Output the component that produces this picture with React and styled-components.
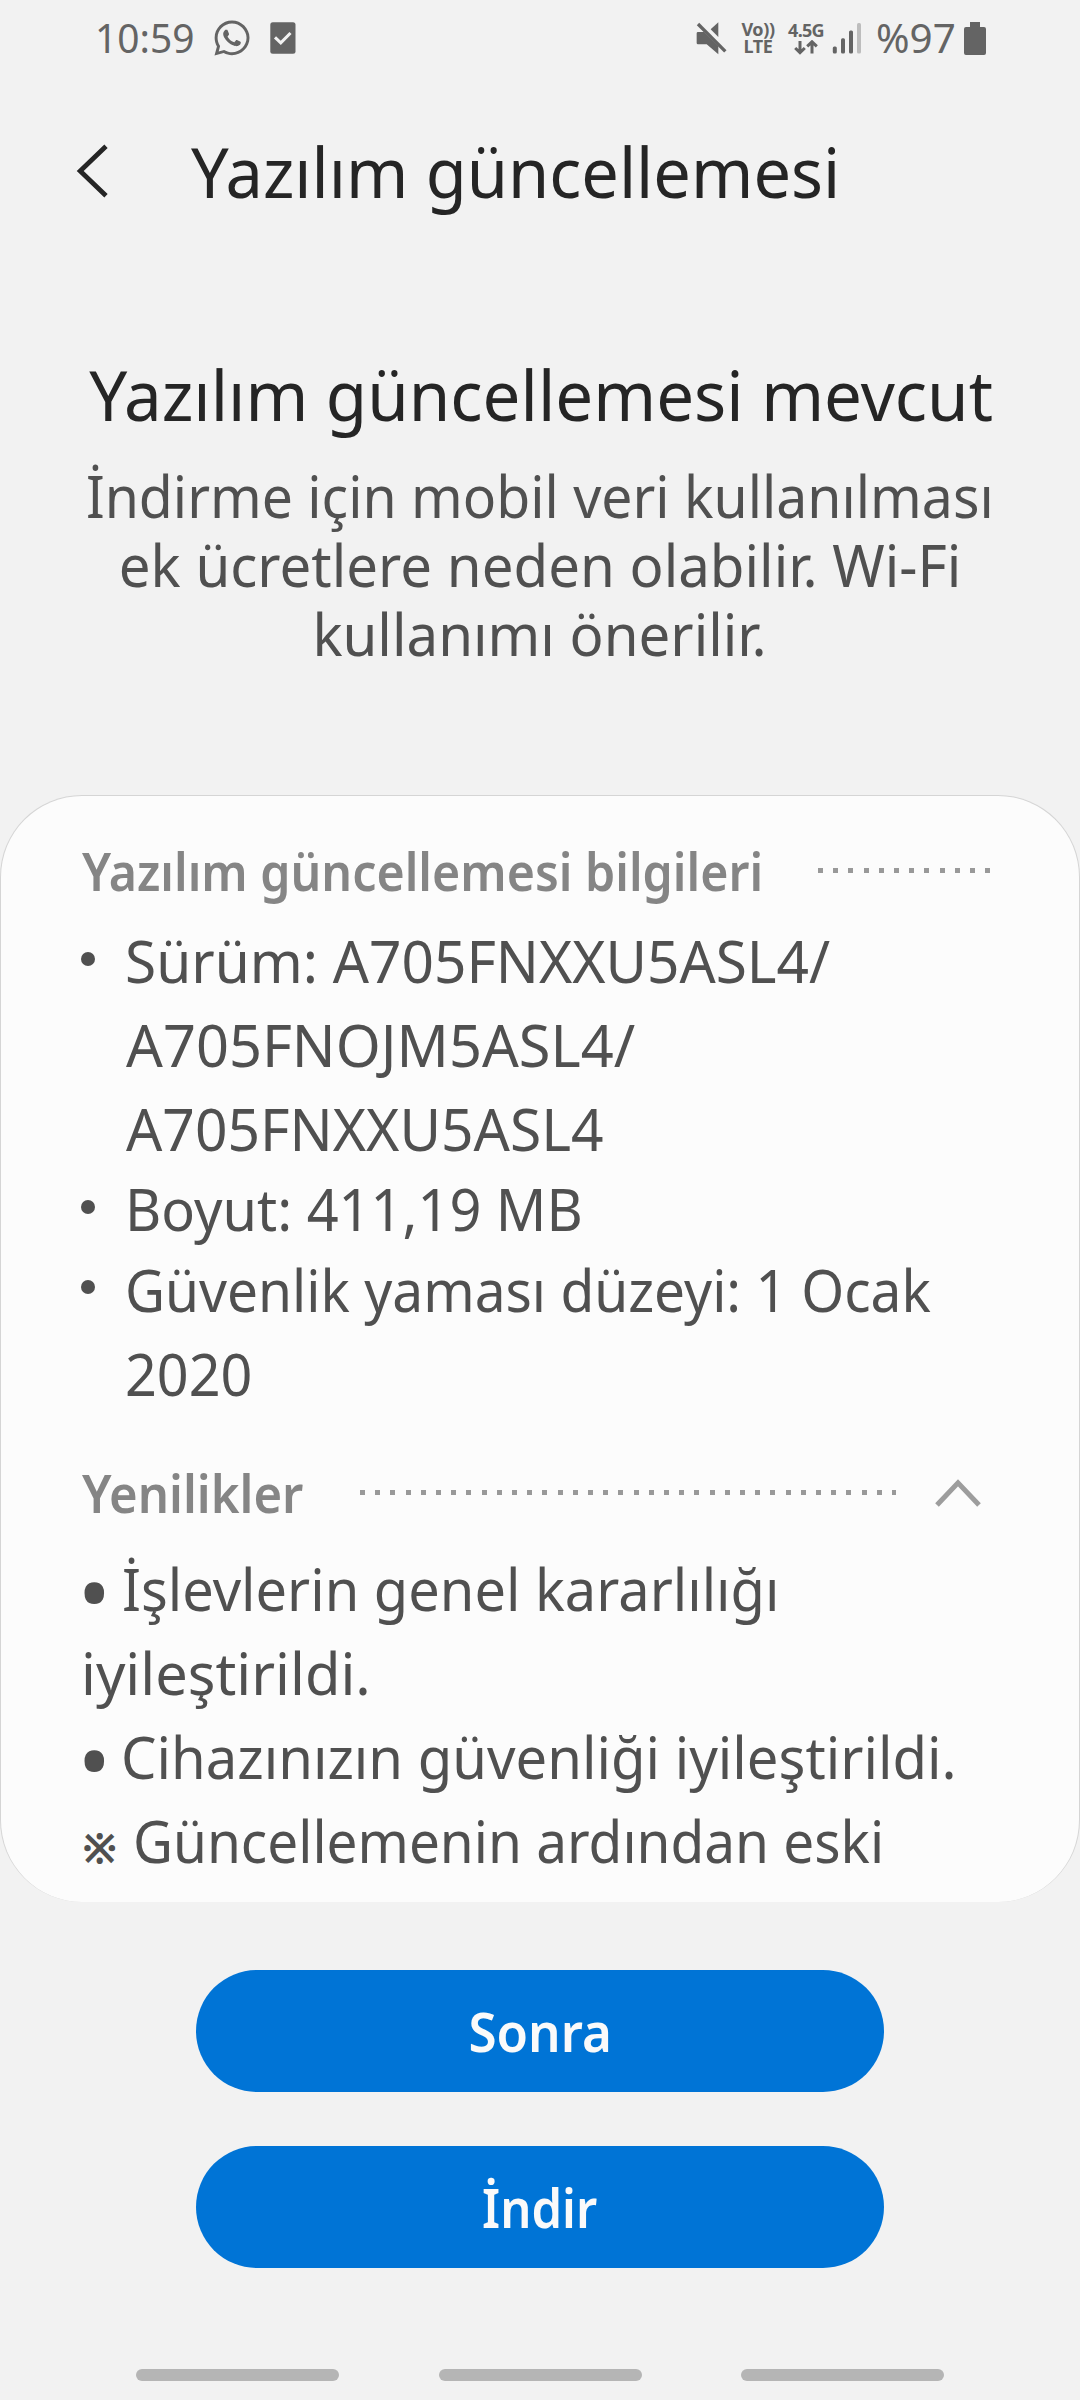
import React, { Component } from 'react'
import styled, { createGlobalStyle } from 'styled-components'
import { FaWhatsapp } from 'react-icons/fa'

const versionLines = [
    { text: 'Sürüm: A705FNXXU5ASL4/', k: 0.9784, shift: 0.4 },
    { text: 'A705FNOJM5ASL4/', k: 0.995, shift: 1 },
    { text: 'A705FNXXU5ASL4', k: 0.981, shift: 1 },
]
const sizeLines = [{ text: 'Boyut: 411,19 MB', k: 0.963, shift: 0.3 }]
const patchLines = [
    { text: 'Güvenlik yaması düzeyi: 1 Ocak', k: 0.949, shift: 0 },
    { text: '2020', k: 0.9601, shift: 0.5 },
]

const InfoItem = ({ lines }) => (
    <Item>
        <Dot />
        <ItemText>
            {lines.map(l => (
                <Line key={l.text} $k={l.k} $shift={l.shift}>{l.text}</Line>
            ))}
        </ItemText>
    </Item>
)

class StatusBar extends Component {
    render() {
        return (
            <Status>
                <Clock>10:59</Clock>
                <FaWhatsapp size={40} />
                <Clipboard width="26" height="32" viewBox="0 0 26 32">
                    <rect x="0.3" y="0.3" width="25.2" height="31.4" rx="2.5" fill="#646464" />
                    <path d="M5 15.3l5.8 5.6L20.5 11" fill="none" stroke="#f2f2f2" strokeWidth="3" />
                </Clipboard>
                <Spacer />
                <Mute width="32" height="36" viewBox="45 60 96 108">
                    <path d="M92 88L115 67V111Z" fill="#646464" />
                    <path d="M54 96H72L115 138V163L80 133H54Q50 133 50 129V100Q50 96 54 96Z" fill="#646464" />
                    <path d="M54 72L136 154" stroke="#646464" strokeWidth="10" />
                </Mute>
                <Volte>
                    <span>Vo))</span>
                    <span>LTE</span>
                </Volte>
                <Mobile>
                    <span>4.5G</span>
                    <svg width="24" height="15" viewBox="0 0 24 15">
                        <path d="M6 1V12M1.2 8L6 12.6L10.8 8" fill="none" stroke="#646464" strokeWidth="3" />
                        <path d="M18 13.5V2M13.2 6.4L18 1.8L22.8 6.4" fill="none" stroke="#646464" strokeWidth="3" />
                    </svg>
                </Mobile>
                <Signal width="30" height="32" viewBox="0 0 30 32">
                    <rect x="0.8" y="24.5" width="4" height="7" rx="1.5" fill="#646464" />
                    <rect x="9" y="16.3" width="4" height="15.2" rx="1.5" fill="#646464" />
                    <rect x="17" y="8.5" width="4" height="23" rx="1.5" fill="#646464" />
                    <rect x="25" y="1" width="4" height="30.5" rx="1.5" fill="#bdbdbd" />
                </Signal>
                <Percent>%97</Percent>
                <svg width="22" height="33" viewBox="0 0 22 33">
                    <path d="M6 0H16V5H20Q22 5 22 7V31Q22 33 20 33H2Q0 33 0 31V7Q0 5 2 5H6Z" fill="#646464" />
                </svg>
            </Status>
        )
    }
}

export default class App extends Component {
    render() {
        return (
            <>
                <GlobalStyle />
                <Screen>
                    <StatusBar />
                    <Header>
                        <svg width="36" height="58" viewBox="0 0 36 58">
                            <path d="M32 4.2L6.2 29L32 53.8" fill="none" stroke="#252525" strokeWidth="4.8" />
                        </svg>
                        <Title>Yazılım güncellemesi</Title>
                    </Header>
                    <Notice>
                        <Heading>Yazılım güncellemesi mevcut</Heading>
                        <NoticeLine $k={0.954}>İndirme için mobil veri kullanılması</NoticeLine>
                        <NoticeLine $k={0.9728}>ek ücretlere neden olabilir. Wi-Fi</NoticeLine>
                        <NoticeLine $k={0.9727}>kullanımı önerilir.</NoticeLine>
                    </Notice>
                    <Card>
                        <SectionRow>
                            <SectionTitle $k={0.929} $width={736.4}>Yazılım güncellemesi bilgileri</SectionTitle>
                            <Dots $width={172.6} />
                        </SectionRow>
                        <List>
                            <InfoItem lines={versionLines} />
                            <InfoItem lines={sizeLines} />
                            <InfoItem lines={patchLines} />
                        </List>
                        <SectionRow>
                            <SectionTitle $k={0.943} $width={278.6}>Yenilikler</SectionTitle>
                            <Dots $width={535.5} />
                            <Chevron width="46" height="28" viewBox="0 0 46 28">
                                <path d="M2 26L23 3.8L44 26" fill="none" stroke="#9d9d9d" strokeWidth="5" />
                            </Chevron>
                        </SectionRow>
                        <News>
                            <NewsLine>
                                <Bullet>•</Bullet>
                                <Line $k={0.965} $shift={-2}>İşlevlerin genel kararlılığı</Line>
                            </NewsLine>
                            <NewsLine>
                                <Line $k={0.9962}>iyileştirildi.</Line>
                            </NewsLine>
                            <NewsLine>
                                <Bullet>•</Bullet>
                                <Line $k={0.969} $shift={-3}>Cihazınızın güvenliği iyileştirildi.</Line>
                            </NewsLine>
                            <NewsLine>
                                <Note>※</Note>
                                <Line $k={0.947}>Güncellemenin ardından eski</Line>
                            </NewsLine>
                        </News>
                    </Card>
                    <Actions>
                        <Button><Label $k={0.93}>Sonra</Label></Button>
                        <Button><Label $k={0.89}>İndir</Label></Button>
                    </Actions>
                    <NavBar>
                        <NavKey />
                        <NavKey />
                        <NavKey />
                    </NavBar>
                </Screen>
            </>
        )
    }
}


const GlobalStyle = createGlobalStyle`
    * {
        box-sizing: border-box;
    }
    body {
        margin: 0;
        background: #f2f2f2;
    }
    svg {
        display: block;
        flex: none;
    }
`
const Screen = styled.div`
    width: 1080px;
    height: 2400px;
    overflow: hidden;
    display: flex;
    flex-direction: column;
    background: #f2f2f2;
    font-family: "Noto Sans", "Open Sans", sans-serif;
    color: #505050;
    white-space: nowrap;
`
const Status = styled.div`
    flex: none;
    height: 76px;
    display: flex;
    align-items: center;
    padding: 0 94px 0 95px;
    color: #646464;
`
const Clock = styled.div`
    width: 116.5px;
    font-size: 40px;
    line-height: 78px;
    transform: scaleX(0.9727);
    transform-origin: left;
`
const Clipboard = styled.svg`
    margin-left: 18.5px;
`
const Spacer = styled.div`
    flex: 1;
`
const Mute = styled.svg`
    margin-right: 14px;
`
const Volte = styled.div`
    width: 34px;
    margin-right: 12px;
    display: flex;
    flex-direction: column;
    align-items: center;
    font-size: 18px;
    font-weight: 700;
    line-height: 17.5px;
    letter-spacing: -0.4px;
`
const Mobile = styled.div`
    width: 38px;
    margin-right: 7px;
    display: flex;
    flex-direction: column;
    align-items: center;
    gap: 1px;
    font-size: 18px;
    font-weight: 700;
    line-height: 18px;
    letter-spacing: -0.7px;
`
const Signal = styled.svg`
    margin-right: 14px;
`
const Percent = styled.div`
    width: 88px;
    font-size: 40px;
    line-height: 78px;
    transform: scaleX(1.01);
    transform-origin: left;
`
const Header = styled.div`
    flex: none;
    height: 190px;
    padding: 0 0 0 74px;
    display: flex;
    align-items: center;
    color: #252525;
`
const Title = styled.h1`
    margin: 0 0 0 80.5px;
    font-size: 70px;
    font-weight: 400;
    line-height: 90px;
    transform: scaleX(0.9535);
    transform-origin: left;
`
const Notice = styled.div`
    flex: none;
    height: 529px;
    padding-top: 82.5px;
    display: flex;
    flex-direction: column;
    align-items: center;
`
const Heading = styled.h2`
    margin: 0 0 22.5px;
    padding-left: 2px;
    color: #252525;
    font-size: 70px;
    font-weight: 400;
    line-height: 90px;
    transform: scaleX(0.9611);
`
const NoticeLine = styled.div`
    font-size: 58px;
    line-height: 69px;
    transform: scaleX(${p => p.$k});
`
const Card = styled.div`
    flex: none;
    height: 1107px;
    padding: 39.5px 0 0 79.8px;
    overflow: hidden;
    background: #fcfcfc;
    border: 1px solid #d5d5d5;
    border-bottom: none;
    border-radius: 82px;
`
const SectionRow = styled.div`
    height: 70px;
    padding-left: 0.8px;
    display: flex;
    align-items: center;
    color: #858585;
`
const SectionTitle = styled.h3`
    margin: 0;
    width: ${p => p.$width}px;
    font-size: 52px;
    font-weight: 600;
    line-height: 70px;
    transform: scaleX(${p => p.$k});
    transform-origin: left;
`
const Dots = styled.div`
    flex: none;
    width: ${p => p.$width}px;
    height: 5px;
    background: repeating-linear-gradient(90deg, #999 0 5px, transparent 5px 15.2px);
`
const Chevron = styled.svg`
    margin-left: 39.8px;
    margin-top: 1px;
`
const List = styled.div`
    padding: 13.7px 0 42.3px;
`
const Item = styled.div`
    display: flex;
    & + & {
        margin-top: -3.8px;
    }
`
const Dot = styled.div`
    width: 14px;
    height: 14px;
    margin: 32.8px 30.2px 0 0;
    border-radius: 50%;
    background: #505050;
`
const ItemText = styled.div`
    flex: 1;
`
const Line = styled.div`
    margin-left: ${p => p.$shift || 0}px;
    font-size: 58px;
    line-height: 84px;
    transform: scaleX(${p => p.$k});
    transform-origin: left;
`
const News = styled.div`
    padding-top: 18.7px;
`
const NewsLine = styled.div`
    display: flex;
    height: 84px;
`
const Bullet = styled.div`
    width: 43.2px;
    font-size: 88px;
    line-height: 88px;
    text-indent: -3px;
`
const Note = styled.div`
    width: 52px;
    font-size: 41px;
    font-weight: 700;
    line-height: 97px;
    text-indent: 1.5px;
`
const Actions = styled.div`
    flex: none;
    height: 467px;
    padding-top: 68px;
    display: flex;
    flex-direction: column;
    align-items: center;
    gap: 54px;
`
const Button = styled.button`
    width: 688px;
    height: 122px;
    padding: 0;
    border: none;
    border-radius: 61px;
    background: #0074d6;
    color: #fafafa;
    font-family: inherit;
    font-size: 55px;
    font-weight: 600;
`
const Label = styled.span`
    display: inline-block;
    line-height: 80px;
    transform: scaleX(${p => p.$k});
`
const NavBar = styled.div`
    flex: none;
    display: flex;
    justify-content: center;
    gap: 99.5px;
`
const NavKey = styled.div`
    width: 203px;
    height: 12px;
    border-radius: 6px;
    background: #b5b5b5;
`
